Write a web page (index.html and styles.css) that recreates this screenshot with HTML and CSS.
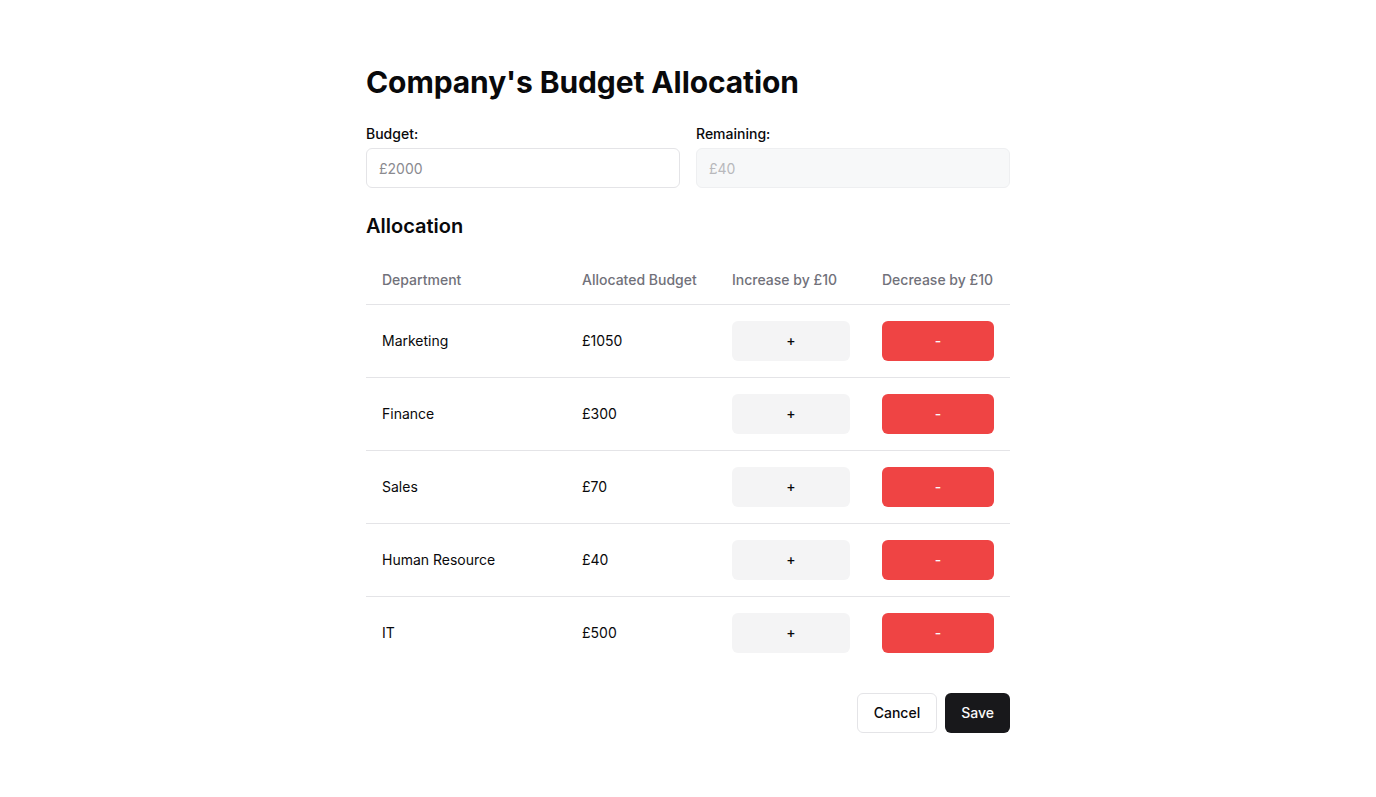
FILE: index.html
```html
<!DOCTYPE html>
<html>
<head>
<meta charset="utf-8">
<link rel="stylesheet" href="styles.css">
</head>
<body>
<main class="page">
  <h1 class="title">Company's Budget Allocation</h1>
  <div class="fields">
    <div class="field">
      <label class="label">Budget:</label>
      <input class="input" placeholder="£2000">
    </div>
    <div class="field">
      <label class="label">Remaining:</label>
      <input class="input input-disabled" placeholder="£40" disabled>
    </div>
  </div>
  <h2 class="subtitle">Allocation</h2>
  <table class="table">
    <colgroup>
      <col class="c1"><col class="c2"><col class="c3"><col class="c4">
    </colgroup>
    <thead>
      <tr><th>Department</th><th>Allocated Budget</th><th>Increase by £10</th><th>Decrease by £10</th></tr>
    </thead>
    <tbody>
      <tr><td>Marketing</td><td>£1050</td><td><button class="btn-inc">+</button></td><td><button class="btn-dec">-</button></td></tr>
      <tr><td>Finance</td><td>£300</td><td><button class="btn-inc">+</button></td><td><button class="btn-dec">-</button></td></tr>
      <tr><td>Sales</td><td>£70</td><td><button class="btn-inc">+</button></td><td><button class="btn-dec">-</button></td></tr>
      <tr><td>Human Resource</td><td>£40</td><td><button class="btn-inc">+</button></td><td><button class="btn-dec">-</button></td></tr>
      <tr><td>IT</td><td>£500</td><td><button class="btn-inc">+</button></td><td><button class="btn-dec">-</button></td></tr>
    </tbody>
  </table>
  <div class="actions">
    <button class="btn-cancel">Cancel</button>
    <button class="btn-save">Save</button>
  </div>
</main>
</body>
</html>
```
FILE: styles.css
```css
* { box-sizing: border-box; }
body {
  margin: 0;
  font-family: Inter, "Liberation Sans", sans-serif;
  color: #09090b;
  background: #fff;
}
.page {
  width: 644px;
  margin: 0 auto;
  padding-top: 64px;
}
.title {
  margin: 0 0 24px;
  font-size: 30px;
  line-height: 36px;
  font-weight: 700;
  letter-spacing: -0.1px;
}
.fields {
  display: flex;
  gap: 16px;
}
.field {
  flex: 1;
  display: flex;
  flex-direction: column;
  gap: 4px;
}
.label {
  font-size: 14px;
  line-height: 20px;
  font-weight: 500;
}
.input {
  height: 40px;
  border: 1px solid #e4e4e7;
  border-radius: 6px;
  padding: 0 12px;
  font-family: inherit;
  font-size: 14px;
  background: #fff;
}
.input::placeholder { color: #8a8a8f; }
.input-disabled { background: #f7f8f9; border-color: #eeeff1; }
.input-disabled::placeholder { color: #b8b8bc; }
.subtitle {
  margin: 24px 0 16px;
  font-size: 20px;
  line-height: 28px;
  font-weight: 600;
}
.table {
  width: 100%;
  border-collapse: collapse;
  table-layout: fixed;
  font-size: 14px;
}
.c1 { width: 200px; }
.c2 { width: 150px; }
.c3 { width: 150px; }
.c4 { width: 144px; }
th {
  height: 48px;
  text-align: left;
  font-weight: 500;
  color: #71717a;
  padding: 0 16px;
  border-bottom: 1px solid #e4e4e7;
}
td {
  padding: 16px;
  border-bottom: 1px solid #e4e4e7;
  line-height: 20px;
}
tbody tr:last-child td { border-bottom: none; }
.btn-inc, .btn-dec {
  display: block;
  width: 100%;
  height: 40px;
  border: none;
  border-radius: 6px;
  font-family: inherit;
  font-size: 14px;
  font-weight: 500;
}
.btn-inc { background: #f4f4f5; color: #09090b; }
.btn-dec { background: #ef4444; color: #fafafa; }
.actions {
  display: flex;
  justify-content: flex-end;
  gap: 8px;
  margin-top: 24px;
}
.btn-cancel, .btn-save {
  height: 40px;
  padding: 0 16px;
  border-radius: 6px;
  font-family: inherit;
  font-size: 14px;
  font-weight: 500;
}
.btn-cancel { background: #fff; border: 1px solid #e4e4e7; color: #09090b; }
.btn-save { background: #18181b; border: none; color: #fafafa; }
```
